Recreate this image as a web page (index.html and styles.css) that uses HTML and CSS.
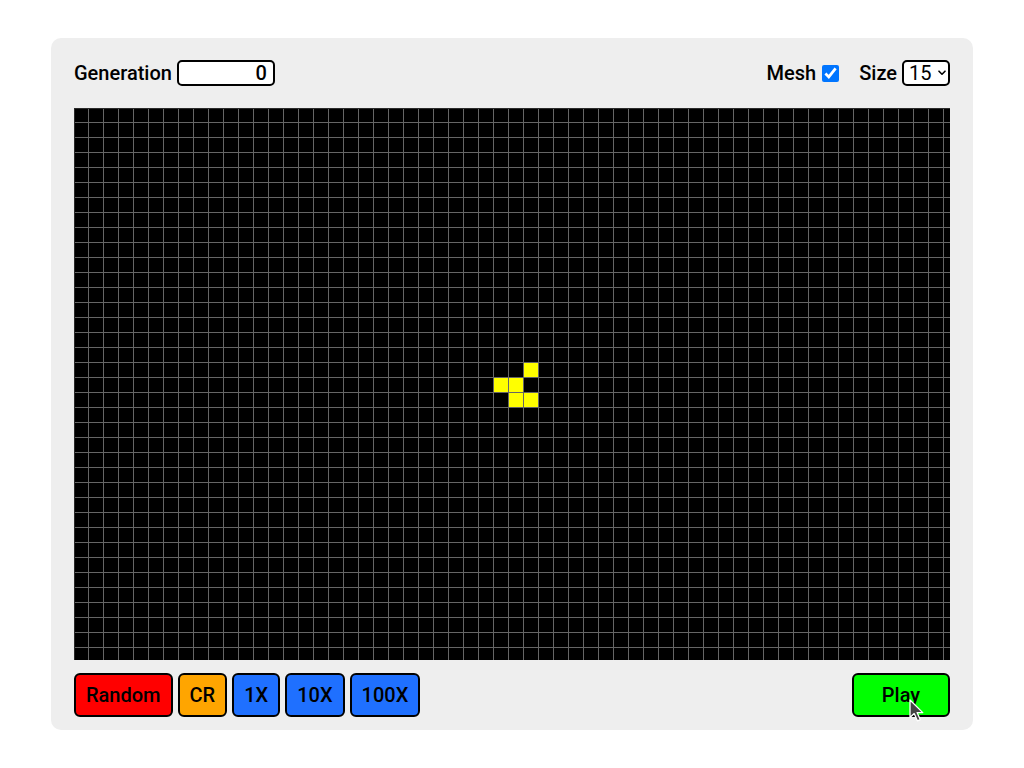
FILE: index.html
```html
<!DOCTYPE html>
<html lang="en">
<head>
<meta charset="utf-8">
<title>Game of Life</title>
<link rel="stylesheet" href="styles.css">
</head>
<body>
<main class="panel">
  <header class="toolbar">
    <label class="field">
      <span>Generation</span>
      <input class="gen-input" type="text" value="0" readonly>
    </label>
    <div class="options">
      <label class="field">
        <span>Mesh</span>
        <input class="mesh-check" type="checkbox" checked>
      </label>
      <label class="field size-field">
        <span>Size</span>
        <span class="select-wrap">
          <select class="size-select">
            <option>10</option>
            <option selected>15</option>
            <option>20</option>
          </select>
          <svg class="chevron" width="8" height="6" viewBox="0 0 8 6" aria-hidden="true">
            <path d="M1 1.2 L4 4.2 L7 1.2" fill="none" stroke="#000" stroke-width="1.6" stroke-linecap="round" stroke-linejoin="round"/>
          </svg>
        </span>
      </label>
    </div>
  </header>

  <div class="board">
    <div class="cell" style="grid-column:31;grid-row:18"></div>
    <div class="cell" style="grid-column:29;grid-row:19"></div>
    <div class="cell" style="grid-column:30;grid-row:19"></div>
    <div class="cell" style="grid-column:30;grid-row:20"></div>
    <div class="cell" style="grid-column:31;grid-row:20"></div>
  </div>

  <footer class="controls">
    <div class="btn-group">
      <button class="btn btn-red">Random</button>
      <button class="btn btn-orange">CR</button>
      <button class="btn btn-blue">1X</button>
      <button class="btn btn-blue">10X</button>
      <button class="btn btn-blue">100X</button>
    </div>
    <button class="btn btn-green">Play
      <svg class="cursor" width="16" height="24" viewBox="0 0 16 24" aria-hidden="true">
        <path d="M1 1 L1 18.5 L5.2 14.6 L8.4 21.8 L11.2 20.6 L8.1 13.6 L13.8 13.6 Z" fill="#444" stroke="#fff" stroke-width="1.3" stroke-linejoin="round"/>
      </svg>
    </button>
  </footer>
</main>
</body>
</html>
```

FILE: styles.css
```css
* {
  box-sizing: border-box;
}

html, body {
  margin: 0;
  background: #ffffff;
}

body {
  font-family: Roboto, "Liberation Sans", Arial, sans-serif;
  font-size: 20px;
  font-weight: 500;
  color: #000;
}

.panel {
  width: 922px;
  margin: 38px auto 0;
  padding: 22px 23px 13px;
  background: #eeeeee;
  border-radius: 10px;
}

.toolbar {
  display: flex;
  justify-content: space-between;
  align-items: center;
  height: 26px;
}

.field {
  display: flex;
  align-items: center;
  gap: 5px;
}

.options {
  display: flex;
  align-items: center;
  gap: 20px;
}

.gen-input {
  flex-shrink: 0;
  width: 98px;
  height: 26px;
  border: 2px solid #000;
  border-radius: 5px;
  background: #fff;
  padding: 0 6px 0 4px;
  text-align: right;
  font-family: Roboto, "Liberation Sans", Arial, sans-serif;
  font-size: 20px;
  font-weight: 500;
  color: #000;
  outline: none;
}

.mesh-check {
  flex-shrink: 0;
  width: 17px;
  height: 17px;
  margin: 0 0 0 1px;
  accent-color: #0075ff;
}

.select-wrap {
  position: relative;
  display: block;
  flex-shrink: 0;
  width: 48px;
  height: 26px;
}

.size-select {
  appearance: none;
  -webkit-appearance: none;
  display: block;
  width: 48px;
  height: 26px;
  border: 2px solid #000;
  border-radius: 5px;
  background: #fff;
  padding: 0 0 0 5px;
  font-family: Roboto, "Liberation Sans", Arial, sans-serif;
  font-size: 20px;
  font-weight: 400;
  line-height: 22px;
  color: #000;
}

.chevron {
  position: absolute;
  left: 36px;
  top: 10px;
  pointer-events: none;
}

.board {
  margin-top: 22px;
  width: 876px;
  height: 552px;
  display: grid;
  grid-template-columns: repeat(59, 15px);
  grid-template-rows: repeat(37, 15px);
  overflow: hidden;
  background-color: #000;
  background-image:
    linear-gradient(to right, transparent 14px, #666666 14px),
    linear-gradient(to bottom, transparent 14px, #666666 14px);
  background-size: 15px 15px;
  box-shadow: inset 1px 1px 0 #2a2a2a;
}

.cell {
  width: 14px;
  height: 14px;
  background: #ffff00;
}

.controls {
  margin-top: 13px;
  display: flex;
  justify-content: space-between;
  align-items: center;
}

.btn-group {
  display: flex;
  gap: 5px;
}

.btn {
  position: relative;
  height: 44px;
  padding: 0 10px;
  border: 2px solid #000;
  border-radius: 6px;
  font-family: Roboto, "Liberation Sans", Arial, sans-serif;
  font-size: 20px;
  font-weight: 500;
  color: #000;
  cursor: pointer;
}

.btn-red {
  background: #ff0000;
}

.btn-orange {
  background: #ffa500;
}

.btn-blue {
  background: #1f70ff;
}

.btn-green {
  width: 98px;
  background: #00ff00;
}

.cursor {
  position: absolute;
  left: 55px;
  top: 24px;
  pointer-events: none;
}
```
